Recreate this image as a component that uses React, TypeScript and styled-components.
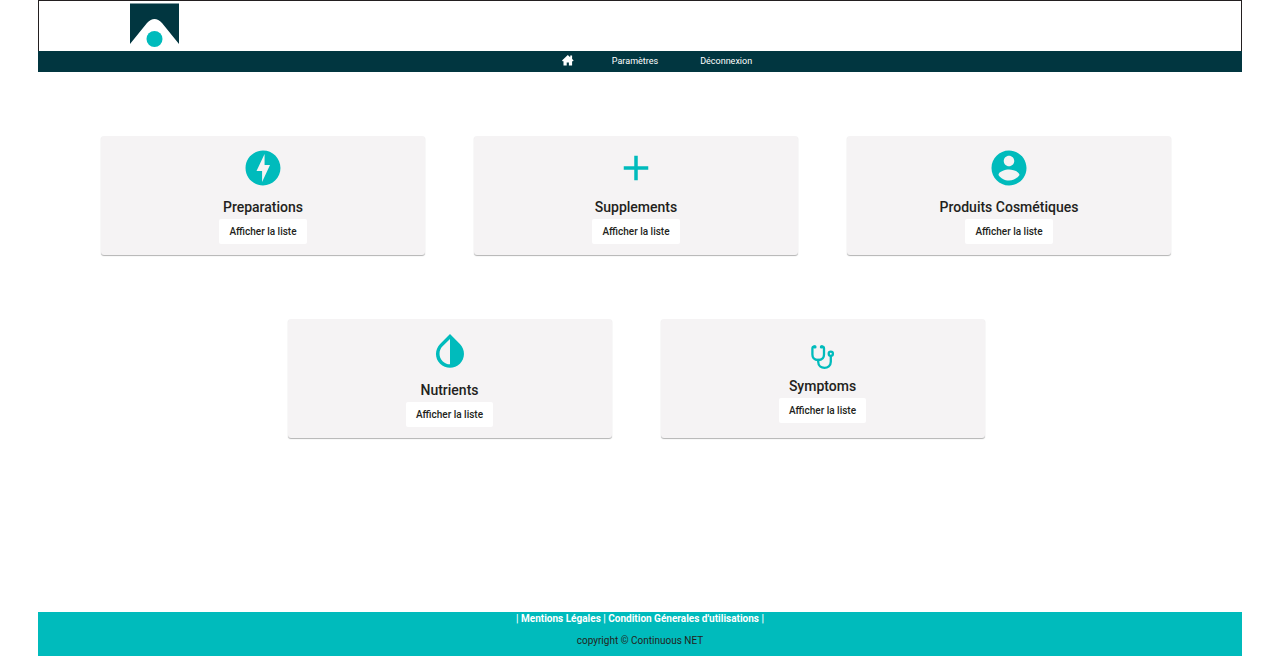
import React from "react";
import styled, { createGlobalStyle } from "styled-components";
import { MdAdd } from "react-icons/md";

const teal = "#00bbbc";
const navy = "#013640";

const GlobalStyle = createGlobalStyle`
  * { box-sizing: border-box; }
  body {
    margin: 0;
    background: #fff;
    color: #231f20;
    font-family: Roboto, "Liberation Sans", sans-serif;
  }
`;

const Page = styled.div`
  display: flex;
  flex-direction: column;
  min-height: 100vh;
  margin: 0 38px;
`;

const Banner = styled.header`
  height: 51px;
  padding: 2px 91px;
  border: 1px solid #231f20;
  border-bottom: 0;
`;

const NavBar = styled.nav`
  display: flex;
  justify-content: center;
  align-items: center;
  gap: 38px;
  height: 21px;
  padding: 0 0 2px 38px;
  background: ${navy};
`;

const NavLink = styled.a`
  color: #fff;
  font-size: 9px;
  line-height: 12px;
  text-decoration: none;
  svg { display: block; }
`;

const NavTextLink = styled(NavLink)`
  padding-right: 4px;
`;

const Main = styled.main`
  display: flex;
  flex-direction: column;
  gap: 64px;
  flex: 1;
  padding: 64px 71px 64px 63px;
`;

const CardRow = styled.div`
  display: flex;
  justify-content: center;
  gap: 49px;
`;

const Card = styled.section`
  display: flex;
  flex-direction: column;
  align-items: center;
  justify-content: center;
  flex: 0 1 324px;
  height: 119px;
  background: #f5f3f4;
  border-radius: 3px;
  box-shadow: 0 1px 1px rgba(0, 0, 0, 0.3);
`;

const IconSlot = styled.div<{ $small?: boolean }>`
  display: flex;
  align-items: flex-end;
  height: ${(p) => (p.$small ? 35 : 42)}px;
  margin-bottom: ${(p) => (p.$small ? 9 : 10)}px;
  color: ${teal};
`;

const Title = styled.h2`
  margin: 0 0 4px;
  font-size: 14px;
  line-height: 16px;
  font-weight: 500;
`;

const ListButton = styled.button`
  height: 25px;
  padding: 0 10px;
  border: 0;
  border-radius: 2px;
  background: #fff;
  color: #231f20;
  font: 500 10px/16px Roboto, "Liberation Sans", sans-serif;
`;

const Footer = styled.footer`
  height: 44px;
  background: ${teal};
  text-align: center;
  font-size: 10px;
  line-height: 14px;
`;

const Legal = styled.p`
  margin: 0 0 8px;
  color: #fff;
  font-weight: 700;
  a { color: inherit; text-decoration: none; }
`;

const Copyright = styled.p`
  margin: 0;
`;

const Logo = () => (
  <svg width="50" height="46" viewBox="0 0 50 46" role="img" aria-label="Continuous NET">
    <path d="M0 0.500H49V41L32 20Q24.500 12 17 20L0 41Z" fill={navy} />
    <circle cx="24.500" cy="36" r="8" fill={teal} />
  </svg>
);

const HomeIcon = () => (
  <svg width="12" height="12" viewBox="0 0 12 12" fill="currentColor" aria-hidden="true">
    <path d="M5.800 0L0 5.600L.6 6.200H1.500V10.500H4.700V7.500H6.900V10.500H10.100V6.200H11L11.600 5.600L10.100 4.100V.6H8.200V2.300Z" />
  </svg>
);

const Glyph = ({ d }: { d: string }) => (
  <svg width="42" height="42" viewBox="0 0 24 24" fill="currentColor" aria-hidden="true">
    <path d={d} />
  </svg>
);

const bolt =
  "M12 2.02c-5.51 0-9.98 4.47-9.98 9.98s4.47 9.98 9.98 9.98 9.98-4.47 9.98-9.98S17.51 2.02 12 2.02zM11.48 20v-6.26H8.300L12.900 4v6.260h3.100L11.480 20z";
const account =
  "M12 2C6.48 2 2 6.48 2 12s4.480 10 10 10 10-4.480 10-10S17.520 2 12 2zm0 3c1.660 0 3 1.340 3 3s-1.340 3-3 3-3-1.340-3-3 1.340-3 3-3zm0 14.200c-2.500 0-4.710-1.280-6-3.220.03-1.990 4-3.080 6-3.080 1.990 0 5.970 1.090 6 3.080-1.290 1.940-3.500 3.220-6 3.220z";
const drop =
  "M17.66 7.93L12 2.27 6.34 7.93c-3.12 3.12-3.12 8.19 0 11.31C7.9 20.8 9.95 21.58 12 21.58c2.05 0 4.1-.78 5.66-2.34 3.12-3.12 3.12-8.19 0-11.31zM12 19.59c-1.6 0-3.11-.62-4.24-1.76C6.62 16.69 6 15.19 6 13.59s.62-3.11 1.76-4.24L12 5.1v14.49z";

const StethoscopeIcon = () => (
  <svg width="24" height="24" viewBox="0 0 24 24" fill="none" stroke="currentColor" strokeWidth="2.3" strokeLinecap="round" aria-hidden="true">
    <path d="M3.800 1.700H3Q1.400 1.700 1.400 3.500V9.500Q1.400 15 7.200 15T13 9.500V3.500Q13 1.700 11.400 1.700H10.600" />
    <path d="M7.200 15V16.800C7.200 24.800 19.800 24.800 19.800 16.800V11.200" />
    <path d="M3.400 1.900H4M10.400 1.900H11" strokeWidth="3.2" />
    <circle cx="19.800" cy="8.700" r="2.100" />
  </svg>
);

type CardData = { title: string; icon: React.ReactNode; small?: boolean };

const rows: CardData[][] = [
  [
    { title: "Preparations", icon: <Glyph d={bolt} /> },
    { title: "Supplements", icon: <MdAdd size={42} /> },
    { title: "Produits Cosmétiques", icon: <Glyph d={account} /> },
  ],
  [
    { title: "Nutrients", icon: <Glyph d={drop} /> },
    { title: "Symptoms", icon: <StethoscopeIcon />, small: true },
  ],
];

export default function App() {
  return (
    <>
      <GlobalStyle />
      <Page>
        <Banner>
          <Logo />
        </Banner>
        <NavBar>
          <NavLink href="#" aria-label="Accueil">
            <HomeIcon />
          </NavLink>
          <NavTextLink href="#parametres">Paramètres</NavTextLink>
          <NavTextLink href="#deconnexion">Déconnexion</NavTextLink>
        </NavBar>
        <Main>
          {rows.map((row, i) => (
            <CardRow key={i}>
              {row.map((card) => (
                <Card key={card.title}>
                  <IconSlot $small={card.small}>{card.icon}</IconSlot>
                  <Title>{card.title}</Title>
                  <ListButton type="button">Afficher la liste</ListButton>
                </Card>
              ))}
            </CardRow>
          ))}
        </Main>
        <Footer>
          <Legal>
            | <a href="#mentions">Mentions Légales</a> | <a href="#conditions">Condition Génerales d'utilisations</a> |
          </Legal>
          <Copyright>copyright © Continuous NET</Copyright>
        </Footer>
      </Page>
    </>
  );
}
